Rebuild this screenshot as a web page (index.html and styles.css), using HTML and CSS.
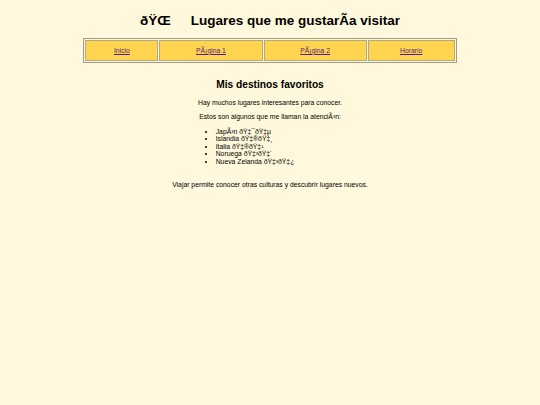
FILE: index.html
```html
<!DOCTYPE html>
<html lang="es">
<head>
<meta charset="utf-8">
<title>Lugares</title>
<link rel="stylesheet" href="styles.css">
</head>
<body>
<header class="top">
  <h1 class="title"><span class="mojo">ðŸŒ</span><span class="gap"></span>Lugares que me gustarÃa visitar</h1>
  <table class="nav">
    <tr>
      <td><a href="#">Inicio</a></td>
      <td><a href="#">PÃ¡gina 1</a></td>
      <td><a href="#">PÃ¡gina 2</a></td>
      <td><a href="#">Horario</a></td>
    </tr>
  </table>
</header>
<main class="content">
  <h2 class="subtitle">Mis destinos favoritos</h2>
  <p>Hay muchos lugares interesantes para conocer.</p>
  <p>Estos son algunos que me llaman la atenciÃ³n:</p>
  <div class="list-wrap">
    <ul class="list">
      <li>JapÃ³n ðŸ‡¯ðŸ‡µ</li>
      <li>Islandia ðŸ‡®ðŸ‡¸</li>
      <li>Italia ðŸ‡®ðŸ‡¹</li>
      <li>Noruega ðŸ‡³ðŸ‡´</li>
      <li>Nueva Zelanda ðŸ‡³ðŸ‡¿</li>
    </ul>
  </div>
  <p class="closing">Viajar permite conocer otras culturas y descubrir lugares nuevos.</p>
</main>
</body>
</html>
```

FILE: styles.css
```css
html, body {
  background: #fff8dc;
}
body {
  margin: 3.4px;
  font-family: "Liberation Sans", Arial, sans-serif;
  font-size: 6.8px;
  color: #000;
}
.title {
  font-size: 13.5px;
  text-align: center;
  margin: 10px 0 9.5px;
  line-height: 15.5px;
}
.gap {
  display: inline-block;
  width: 20px;
}
.nav {
  width: 70%;
  margin: 0 auto;
  border: 1px solid #a39c7e;
  border-collapse: separate;
  border-spacing: 1px;
  background: #fff8dc;
}
.nav td {
  background: #ffd54f;
  border: 1px solid #b2aa86;
  text-align: center;
  padding: 5.5px 8px;
  line-height: 7.5px;
}
.nav a {
  color: #551a8b;
}
.content {
  text-align: center;
}
.subtitle {
  font-size: 10.2px;
  margin: 16px 0 8px;
  line-height: 11.7px;
}
.content p {
  margin: 7px 0;
  line-height: 7.8px;
}
.list-wrap {
  display: flex;
  justify-content: center;
}
.list {
  text-align: left;
  margin: -0.5px 56px 0 0;
  padding-left: 26px;
  line-height: 7.5px;
}
.content .closing {
  margin-top: 16px;
}
```
